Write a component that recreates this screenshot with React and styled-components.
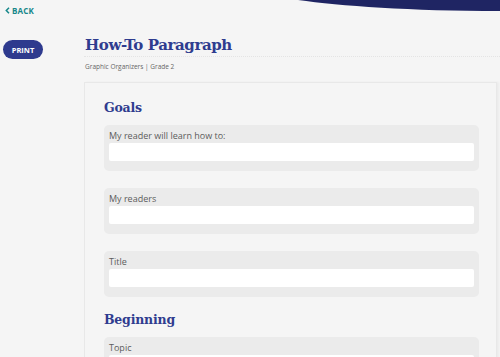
import React from "react";
import styled, { createGlobalStyle } from "styled-components";

const Global = createGlobalStyle`
  html, body { margin: 0; padding: 0; background: #f5f5f5; }
  body { font-family: "Open Sans", "Liberation Sans", sans-serif; overflow: hidden; }
`;

const Page = styled.div`
  position: relative;
  width: 500px;
  height: 357px;
  overflow: hidden;
  background: #f5f5f5;
`;

const Swoosh = styled.svg`
  position: absolute;
  top: 0;
  right: 0;
`;

const TopBar = styled.div`
  height: 20px;
  display: flex;
  align-items: center;
  padding-left: 5px;
`;

const BackLink = styled.a`
  display: flex;
  align-items: center;
  gap: 2px;
  color: #17878a;
  font-family: "Open Sans", sans-serif;
  font-weight: 700;
  font-size: 8px;
  letter-spacing: 0.2px;
  text-decoration: none;
`;

const Body = styled.div`
  display: flex;
`;

const Sidebar = styled.div`
  width: 84px;
  flex: none;
  padding-top: 20px;
  padding-left: 3px;
  box-sizing: border-box;
`;

const PrintButton = styled.button`
  display: block;
  width: 40px;
  height: 19px;
  border: none;
  border-radius: 10px;
  background: #2e3a8e;
  color: #fff;
  font-family: "Open Sans", sans-serif;
  font-weight: 700;
  font-size: 7.5px;
  padding: 0;
`;

const Main = styled.div`
  flex: 1;
  min-width: 0;
  padding-right: 3px;
`;

const Title = styled.h1`
  margin: 0 -3px 0 0;
  padding: 15px 0 1px 1px;
  font-family: "DejaVu Serif", serif;
  font-weight: 700;
  font-size: 15px;
  letter-spacing: -0.4px;
  line-height: 20px;
  color: #2f3c8f;
  border-bottom: 1px dotted #e4e4e4;
`;

const Subtitle = styled.div`
  margin-top: 5px;
  padding-left: 1px;
  font-size: 6.5px;
  line-height: 9px;
  color: #666;
`;

const Card = styled.div`
  margin-top: 11px;
  border: 1px solid #e8e8e8;
  border-bottom: none;
  padding: 16px 17px 0 19px;
  box-shadow: 2px 0 2px rgba(0, 0, 0, 0.04);
  display: flex;
  flex-direction: column;
  gap: 14px;
`;

const Section = styled.section`
  display: flex;
  flex-direction: column;
`;

const SectionTitle = styled.h2`
  margin: 0 0 8px;
  font-family: "DejaVu Serif", serif;
  font-weight: 700;
  font-size: 12.5px;
  letter-spacing: -0.2px;
  line-height: 18px;
  color: #2f3c8f;
`;

const Fields = styled.div`
  display: flex;
  flex-direction: column;
  gap: 17px;
`;

const FieldBox = styled.label`
  display: flex;
  flex-direction: column;
  gap: 2px;
  background: #ebebeb;
  border-radius: 5px;
  padding: 5px 5px 10px;
`;

const FieldLabel = styled.span`
  font-size: 9px;
  line-height: 11px;
  color: #5c5c5c;
`;

const Input = styled.div`
  height: 18px;
  background: #fff;
  border-radius: 2px;
`;

const sections = [
  { title: "Goals", fields: ["My reader will learn how to:", "My readers", "Title"] },
  { title: "Beginning", fields: ["Topic", "Materials"] },
];

export default function App() {
  return (
    <Page>
      <Global />
      <Swoosh width="210" height="12" viewBox="290 0 210 12">
        <path d="M298 0 C 340 6, 410 11, 500 11 L 500 0 Z" fill="#1f2563" />
      </Swoosh>
      <TopBar>
        <BackLink href="#">
          <svg width="5" height="7" viewBox="0 0 5 7">
            <path d="M4 0.8 L1.3 3.5 L4 6.2" fill="none" stroke="#17878a" strokeWidth="1.5" />
          </svg>
          BACK
        </BackLink>
      </TopBar>
      <Body>
        <Sidebar>
          <PrintButton>PRINT</PrintButton>
        </Sidebar>
        <Main>
          <Title>How-To Paragraph</Title>
          <Subtitle>Graphic Organizers | Grade 2</Subtitle>
          <Card>
            {sections.map((s) => (
              <Section key={s.title}>
                <SectionTitle>{s.title}</SectionTitle>
                <Fields>
                  {s.fields.map((f) => (
                    <FieldBox key={f}>
                      <FieldLabel>{f}</FieldLabel>
                      <Input />
                    </FieldBox>
                  ))}
                </Fields>
              </Section>
            ))}
          </Card>
        </Main>
      </Body>
    </Page>
  );
}
